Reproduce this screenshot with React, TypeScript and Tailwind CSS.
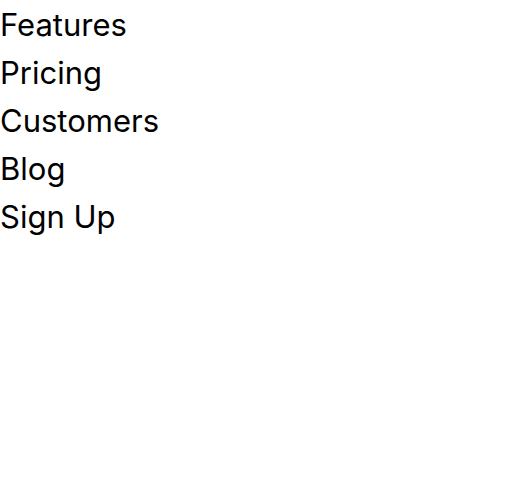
const links = ["Features", "Pricing", "Customers", "Blog", "Sign Up"];

export default function App() {
  return (
    <nav className="bg-white font-['Inter',sans-serif] text-black">
      <ul className="flex flex-col pt-px">
        {links.map((label) => (
          <li key={label}>
            <a href="#" className="block text-[31px] leading-[48px]">
              {label}
            </a>
          </li>
        ))}
      </ul>
    </nav>
  );
}
